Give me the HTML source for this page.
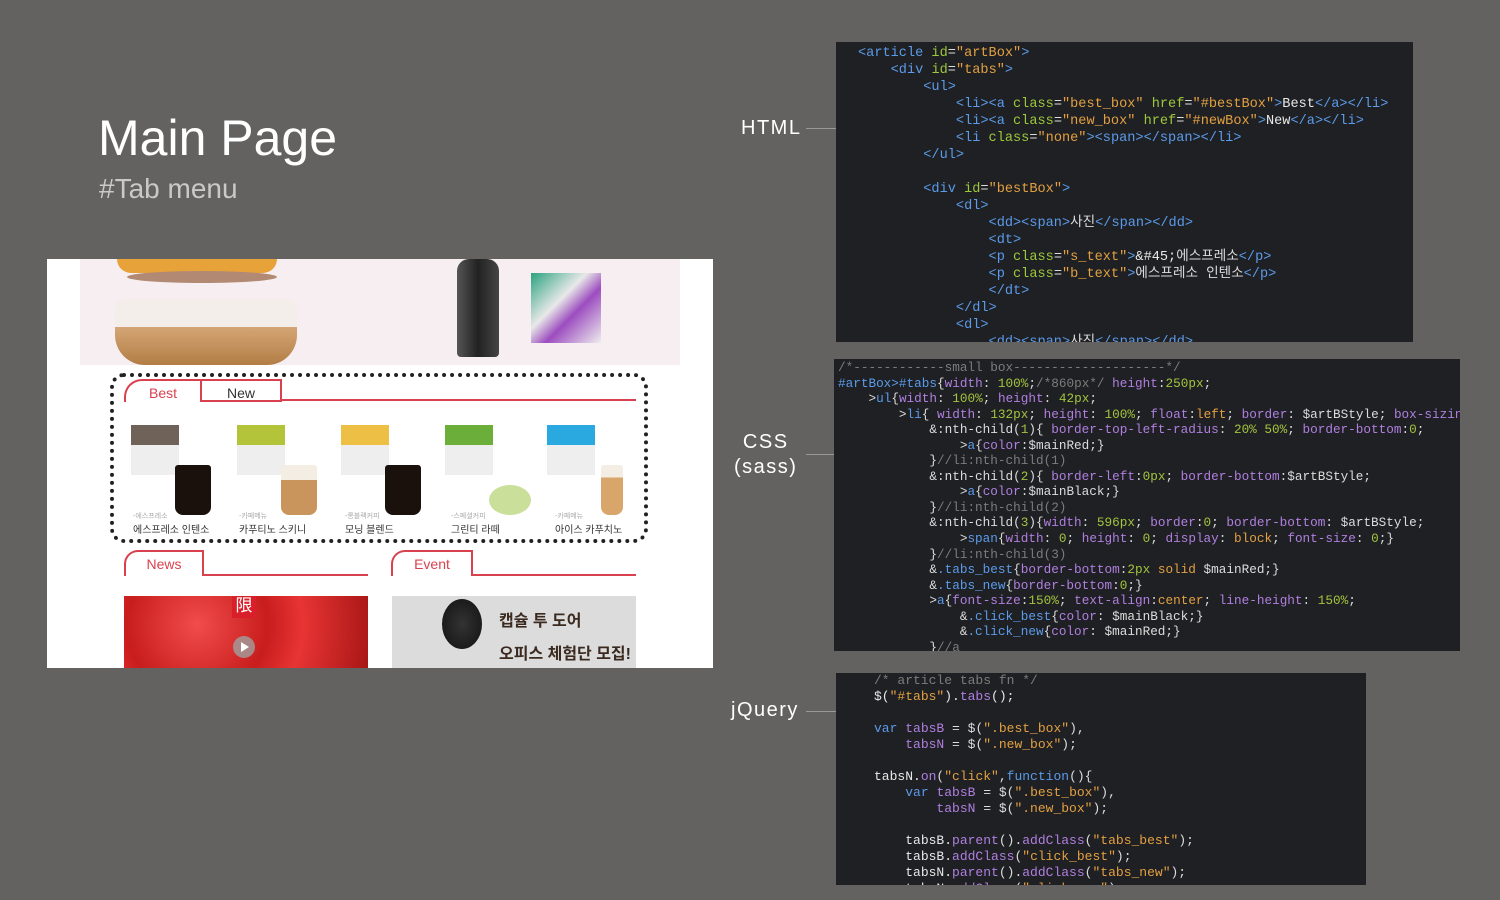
<!DOCTYPE html>
<html><head><meta charset="utf-8">
<style>
*{margin:0;padding:0;box-sizing:border-box}
body{width:1500px;height:900px;background:#636261;position:relative;overflow:hidden;font-family:"Liberation Sans","Noto Sans CJK KR",sans-serif}
.abs{position:absolute}
.code{position:absolute;background:#1f2023;font-family:"Liberation Mono","Noto Sans CJK KR",monospace;color:#dcdcdc;white-space:pre;overflow:hidden}
.t{color:#5b9bea}.a{color:#9cc83c}.s{color:#e3a042}.w{color:#e8e8e8}.c{color:#7c7c7c}.p{color:#b07fe0}.g{color:#a2c43e}.o{color:#e3a042}
.lbl{position:absolute;color:#fff;font-size:20px;letter-spacing:1.5px;text-align:center;line-height:25px}
.ln{position:absolute;height:1px;background:#999}
.dot{position:absolute;width:9px;height:9px;border-radius:50%;background:#999}
.tab{position:absolute;border:2px solid #d9414f;border-bottom:none;background:#fff;font-size:14px;text-align:center;line-height:24px}
.prod{position:absolute;width:90px;height:95px}
.box{position:absolute;left:0;top:0;width:48px;height:50px}
.cup{position:absolute;left:44px;top:40px;width:36px;height:50px;border-radius:3px 3px 8px 8px}
.sm{position:absolute;font-size:7px;color:#aaa}
.bg{position:absolute;font-size:10px;color:#333}
</style></head><body>

<div class="abs" style="left:98px;top:108px;font-size:50px;color:#fff;line-height:60px">Main Page</div>
<div class="abs" style="left:99px;top:172px;font-size:28px;color:#c9c9c9;line-height:34px">#Tab menu</div>

<!-- mockup -->
<div class="abs" style="left:47px;top:259px;width:666px;height:409px;background:#fff;overflow:hidden">
  <div class="abs" style="left:33px;top:0;width:600px;height:106px;background:#f6eef1"></div>
  <div class="abs" style="left:70px;top:0;width:160px;height:14px;background:#e8a23a;border-radius:0 0 40px 40px"></div>
  <div class="abs" style="left:80px;top:12px;width:150px;height:12px;background:#b28a73;border-radius:50%"></div>
  <div class="abs" style="left:68px;top:66px;width:182px;height:40px;background:linear-gradient(#d6a878,#b37d45);border-radius:0 0 30px 30px"></div>
  <div class="abs" style="left:68px;top:40px;width:182px;height:28px;background:#f3eee9;border-radius:10px 10px 0 0"></div>
  <div class="abs" style="left:410px;top:0;width:42px;height:98px;background:linear-gradient(90deg,#555,#222,#444);border-radius:12px 12px 4px 4px"></div>
  <div class="abs" style="left:484px;top:14px;width:70px;height:70px;background:linear-gradient(135deg,#2aa37f,#e8e8e8 40%,#9c4cbf 60%,#eee)"></div>

  <div class="abs" style="left:63px;top:114px;width:538px;height:170px;border:4px dotted #222;border-radius:14px"></div>
  <div class="tab" style="left:77px;top:120px;width:78px;height:23px;color:#d9414f;border-radius:18px 0 0 0">Best</div>
  <div class="tab" style="left:155px;top:120px;width:80px;height:23px;color:#333;border:2px solid #d9414f;border-left:none;background:#fff">New</div>
  <div class="abs" style="left:235px;top:140px;width:354px;height:2px;background:#d9414f"></div>

  <div class="prod" style="left:84px;top:166px"><div class="box" style="background:linear-gradient(#6e6259 40%,#eee 40%)"></div><div class="cup" style="background:#1a110c"></div></div>
  <div class="prod" style="left:190px;top:166px"><div class="box" style="background:linear-gradient(#b3c43a 40%,#eee 40%)"></div><div class="cup" style="background:linear-gradient(#f3ede4 30%,#c9955c 30%)"></div></div>
  <div class="prod" style="left:294px;top:166px"><div class="box" style="background:linear-gradient(#eebf45 40%,#eee 40%)"></div><div class="cup" style="background:#1a110c"></div></div>
  <div class="prod" style="left:398px;top:166px"><div class="box" style="background:linear-gradient(#6cae3a 40%,#eee 40%)"></div><div class="cup" style="top:60px;height:30px;width:42px;background:#c9df9a;border-radius:50%"></div></div>
  <div class="prod" style="left:500px;top:166px"><div class="box" style="background:linear-gradient(#2aa8e0 40%,#eee 40%)"></div><div class="cup" style="width:22px;left:54px;background:linear-gradient(#f3ede4 25%,#d8a66a 25%)"></div></div>

  <div class="sm" style="left:86px;top:252px">-에스프레소</div><div class="bg" style="left:86px;top:262px">에스프레소 인텐소</div>
  <div class="sm" style="left:192px;top:252px">-카페메뉴</div><div class="bg" style="left:192px;top:262px">카푸티노 스키니</div>
  <div class="sm" style="left:298px;top:252px">-롱블랙커피</div><div class="bg" style="left:298px;top:262px">모닝 블렌드</div>
  <div class="sm" style="left:404px;top:252px">-스페셜커피</div><div class="bg" style="left:404px;top:262px">그린티 라떼</div>
  <div class="sm" style="left:508px;top:252px">-카페메뉴</div><div class="bg" style="left:508px;top:262px">아이스 카푸치노</div>

  <div class="tab" style="left:77px;top:291px;width:80px;height:26px;color:#d9414f;border-radius:14px 0 0 0;line-height:24px">News</div>
  <div class="abs" style="left:157px;top:315px;width:164px;height:2px;background:#d9414f"></div>
  <div class="tab" style="left:344px;top:291px;width:82px;height:26px;color:#d9414f;border-radius:14px 0 0 0;line-height:24px">Event</div>
  <div class="abs" style="left:426px;top:315px;width:163px;height:2px;background:#d9414f"></div>

  <div class="abs" style="left:77px;top:337px;width:244px;height:72px;background:radial-gradient(circle at 30% 40%,#f24c4c,#c81d1d 40%,#e83434 60%,#a81616)"></div>
  <div class="abs" style="left:185px;top:337px;width:24px;height:22px;background:#d9202a;color:#fff;font-size:17px;text-align:center;line-height:20px">限</div>
  <div class="abs" style="left:186px;top:377px;width:22px;height:22px;border-radius:50%;background:rgba(160,160,160,.8)"></div>
  <div class="abs" style="left:194px;top:383px;width:0;height:0;border-left:8px solid #fff;border-top:5px solid transparent;border-bottom:5px solid transparent"></div>
  <div class="abs" style="left:345px;top:337px;width:244px;height:72px;background:#dcdcdc"></div>
  <div class="abs" style="left:395px;top:340px;width:40px;height:50px;background:radial-gradient(#333,#111);border-radius:50%"></div>
  <div class="abs" style="left:452px;top:348px;font-size:16px;font-weight:bold;color:#3a2a20">캡슐 투 도어</div>
  <div class="abs" style="left:452px;top:381px;font-size:16px;font-weight:bold;color:#3a2a20">오피스 체험단 모집!</div>
</div>

<div class="lbl" style="left:741px;top:116px">HTML</div>
<div class="ln" style="left:806px;top:128px;width:46px"></div><div class="dot" style="left:848px;top:124px"></div>
<div class="lbl" style="left:734px;top:430px">CSS<br>(sass)</div>
<div class="ln" style="left:806px;top:454px;width:46px"></div><div class="dot" style="left:848px;top:449px"></div>
<div class="lbl" style="left:731px;top:698px">jQuery</div>
<div class="ln" style="left:806px;top:711px;width:46px"></div><div class="dot" style="left:848px;top:706px"></div>

<div class="code" style="left:836px;top:42px;width:577px;height:300px;font-size:13.6px;line-height:17px;padding:3px 0 0 22px"><span class="t">&lt;article </span><span class="a">id</span>=<span class="s">"artBox"</span><span class="t">&gt;</span>
    <span class="t">&lt;div </span><span class="a">id</span>=<span class="s">"tabs"</span><span class="t">&gt;</span>
        <span class="t">&lt;ul&gt;</span>
            <span class="t">&lt;li&gt;&lt;a </span><span class="a">class</span>=<span class="s">"best_box"</span> <span class="a">href</span>=<span class="s">"#bestBox"</span><span class="t">&gt;</span><span class="w">Best</span><span class="t">&lt;/a&gt;&lt;/li&gt;</span>
            <span class="t">&lt;li&gt;&lt;a </span><span class="a">class</span>=<span class="s">"new_box"</span> <span class="a">href</span>=<span class="s">"#newBox"</span><span class="t">&gt;</span><span class="w">New</span><span class="t">&lt;/a&gt;&lt;/li&gt;</span>
            <span class="t">&lt;li </span><span class="a">class</span>=<span class="s">"none"</span><span class="t">&gt;&lt;span&gt;&lt;/span&gt;&lt;/li&gt;</span>
        <span class="t">&lt;/ul&gt;</span>

        <span class="t">&lt;div </span><span class="a">id</span>=<span class="s">"bestBox"</span><span class="t">&gt;</span>
            <span class="t">&lt;dl&gt;</span>
                <span class="t">&lt;dd&gt;&lt;span&gt;</span>사진<span class="t">&lt;/span&gt;&lt;/dd&gt;</span>
                <span class="t">&lt;dt&gt;</span>
                <span class="t">&lt;p </span><span class="a">class</span>=<span class="s">"s_text"</span><span class="t">&gt;</span><span class="w">&amp;#45;</span>에스프레소<span class="t">&lt;/p&gt;</span>
                <span class="t">&lt;p </span><span class="a">class</span>=<span class="s">"b_text"</span><span class="t">&gt;</span>에스프레소 인텐소<span class="t">&lt;/p&gt;</span>
                <span class="t">&lt;/dt&gt;</span>
            <span class="t">&lt;/dl&gt;</span>
            <span class="t">&lt;dl&gt;</span>
                <span class="t">&lt;dd&gt;&lt;span&gt;</span>사진<span class="t">&lt;/span&gt;&lt;/dd&gt;</span></div>

<div class="code" style="left:834px;top:359px;width:626px;height:292px;font-size:12.7px;line-height:15.55px;padding:1px 0 0 4px"><span class="c">/*------------small box--------------------*/</span>
<span class="t">#artBox&gt;#tabs</span>{<span class="p">width</span>: <span class="g">100%</span>;<span class="c">/*860px*/</span> <span class="p">height</span>:<span class="g">250px</span>;
    &gt;<span class="t">ul</span>{<span class="p">width</span>: <span class="g">100%</span>; <span class="p">height</span>: <span class="g">42px</span>;
        &gt;<span class="t">li</span>{ <span class="p">width</span>: <span class="g">132px</span>; <span class="p">height</span>: <span class="g">100%</span>; <span class="p">float</span>:<span class="o">left</span>; <span class="p">border</span>: $artBStyle; <span class="p">box-sizing</span>
            &amp;:nth-child(<span class="g">1</span>){ <span class="p">border-top-left-radius</span>: <span class="g">20% 50%</span>; <span class="p">border-bottom</span>:<span class="g">0</span>;
                &gt;<span class="t">a</span>{<span class="p">color</span>:$mainRed;}
            }<span class="c">//li:nth-child(1)</span>
            &amp;:nth-child(<span class="g">2</span>){ <span class="p">border-left</span>:<span class="g">0px</span>; <span class="p">border-bottom</span>:$artBStyle;
                &gt;<span class="t">a</span>{<span class="p">color</span>:$mainBlack;}
            }<span class="c">//li:nth-child(2)</span>
            &amp;:nth-child(<span class="g">3</span>){<span class="p">width</span>: <span class="g">596px</span>; <span class="p">border</span>:<span class="g">0</span>; <span class="p">border-bottom</span>: $artBStyle;
                &gt;<span class="t">span</span>{<span class="p">width</span>: <span class="g">0</span>; <span class="p">height</span>: <span class="g">0</span>; <span class="p">display</span>: <span class="o">block</span>; <span class="p">font-size</span>: <span class="g">0</span>;}
            }<span class="c">//li:nth-child(3)</span>
            &amp;<span class="t">.tabs_best</span>{<span class="p">border-bottom</span>:<span class="g">2px</span> <span class="o">solid</span> $mainRed;}
            &amp;<span class="t">.tabs_new</span>{<span class="p">border-bottom</span>:<span class="g">0</span>;}
            &gt;<span class="t">a</span>{<span class="p">font-size</span>:<span class="g">150%</span>; <span class="p">text-align</span>:<span class="o">center</span>; <span class="p">line-height</span>: <span class="g">150%</span>;
                &amp;<span class="t">.click_best</span>{<span class="p">color</span>: $mainBlack;}
                &amp;<span class="t">.click_new</span>{<span class="p">color</span>: $mainRed;}
            }<span class="c">//a</span></div>

<div class="code" style="left:836px;top:673px;width:530px;height:212px;font-size:13px;line-height:16px;padding:0 0 0 38px"><span class="c">/* article tabs fn */</span>
<span class="w">$(</span><span class="s">"#tabs"</span><span class="w">).</span><span class="p">tabs</span><span class="w">();</span>

<span class="t">var</span> <span class="p">tabsB</span> = $(<span class="s">".best_box"</span>),
    <span class="p">tabsN</span> = $(<span class="s">".new_box"</span>);

<span class="w">tabsN.</span><span class="p">on</span>(<span class="s">"click"</span>,<span class="t">function</span>(){
    <span class="t">var</span> <span class="p">tabsB</span> = $(<span class="s">".best_box"</span>),
        <span class="p">tabsN</span> = $(<span class="s">".new_box"</span>);

    <span class="w">tabsB.</span><span class="p">parent</span>().<span class="p">addClass</span>(<span class="s">"tabs_best"</span>);
    <span class="w">tabsB.</span><span class="p">addClass</span>(<span class="s">"click_best"</span>);
    <span class="w">tabsN.</span><span class="p">parent</span>().<span class="p">addClass</span>(<span class="s">"tabs_new"</span>);
    <span class="w">tabsN.</span><span class="p">addClass</span>(<span class="s">"click_new"</span>);</div>

</body></html>
